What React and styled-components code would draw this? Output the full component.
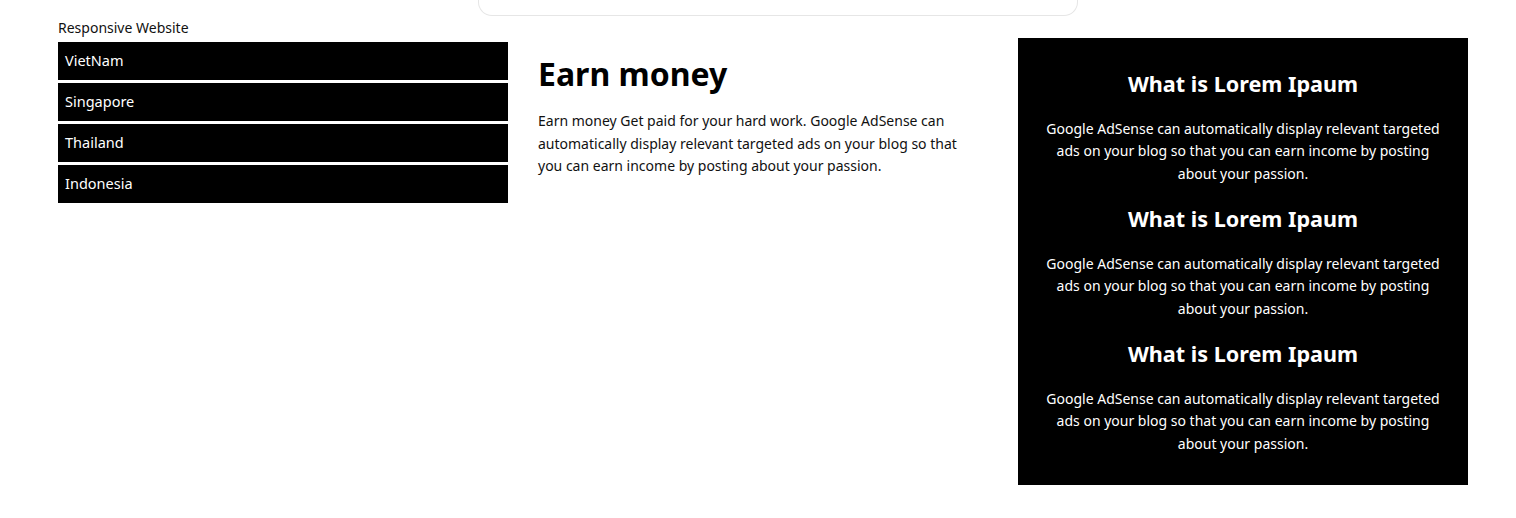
import styled, { createGlobalStyle } from "styled-components"

const GlobalStyle = createGlobalStyle`
    html, body {
        margin: 0;
        padding: 0;
        background: #fff;
    }
    body {
        font-family: "Noto Sans", "Open Sans", sans-serif;
        font-size: 14px;
        color: #111;
    }
`

const Page = styled.div`
    width: 1516px;
    height: 518px;
    overflow: hidden;
`

const TopBar = styled.div`
    margin-left: 478px;
    width: 598px;
    height: 15px;
    border: 1px solid #e6e6e6;
    border-top: none;
    border-radius: 0 0 14px 14px;
`

const Row = styled.div`
    display: grid;
    grid-template-columns: 450px 450px 450px;
    column-gap: 30px;
    align-items: start;
    padding: 2px 0 0 58px;
`

const Caption = styled.div`
    line-height: 19px;
    margin-bottom: 5px;
`

const Menu = styled.ul`
    list-style: none;
    margin: 0;
    padding: 0;
    display: flex;
    flex-direction: column;
    gap: 3.6px;
`

const MenuItem = styled.li`
    background: #000;
    color: #fff;
    height: 37.5px;
    line-height: 37.5px;
    padding-left: 7px;
    font-size: 14.5px;
`

const Article = styled.div`
    margin-top: 20px;
`

const Title = styled.h1`
    font-size: 32px;
    font-weight: 700;
    line-height: 38px;
    margin: 17px 0 17px;
    color: #000;
`

const Text = styled.p`
    margin: 0;
    line-height: 22.5px;
    width: 430px;
`

const Aside = styled.div`
    margin-top: 20px;
    background: #000;
    color: #fff;
    text-align: center;
    padding: 12px 26px 9px;
    display: flow-root;
`

const AsideTitle = styled.h2`
    font-size: 21.6px;
    font-weight: 700;
    line-height: 26px;
    margin: 20.75px 0;
`

const AsideText = styled.p`
    margin: 20.75px 0;
    line-height: 22.5px;
`

const countries = ["VietNam", "Singapore", "Thailand", "Indonesia"]

export default function App() {
    return (
        <>
            <GlobalStyle />
            <Page>
                <TopBar />
                <Row>
                    <div>
                        <Caption>Responsive Website</Caption>
                        <Menu>
                            {countries.map(c => <MenuItem key={c}>{c}</MenuItem>)}
                        </Menu>
                    </div>
                    <Article>
                        <Title>Earn money</Title>
                        <Text>
                            Earn money Get paid for your hard work. Google AdSense can automatically display relevant targeted ads on your blog so that you can earn income by posting about your passion.
                        </Text>
                    </Article>
                    <Aside>
                        {[1, 2, 3].map(i => (
                            <div key={i}>
                                <AsideTitle>What is Lorem Ipaum</AsideTitle>
                                <AsideText>
                                    Google AdSense can automatically display relevant targeted ads on your blog so that you can earn income by posting about your passion.
                                </AsideText>
                            </div>
                        ))}
                    </Aside>
                </Row>
            </Page>
        </>
    )
}
